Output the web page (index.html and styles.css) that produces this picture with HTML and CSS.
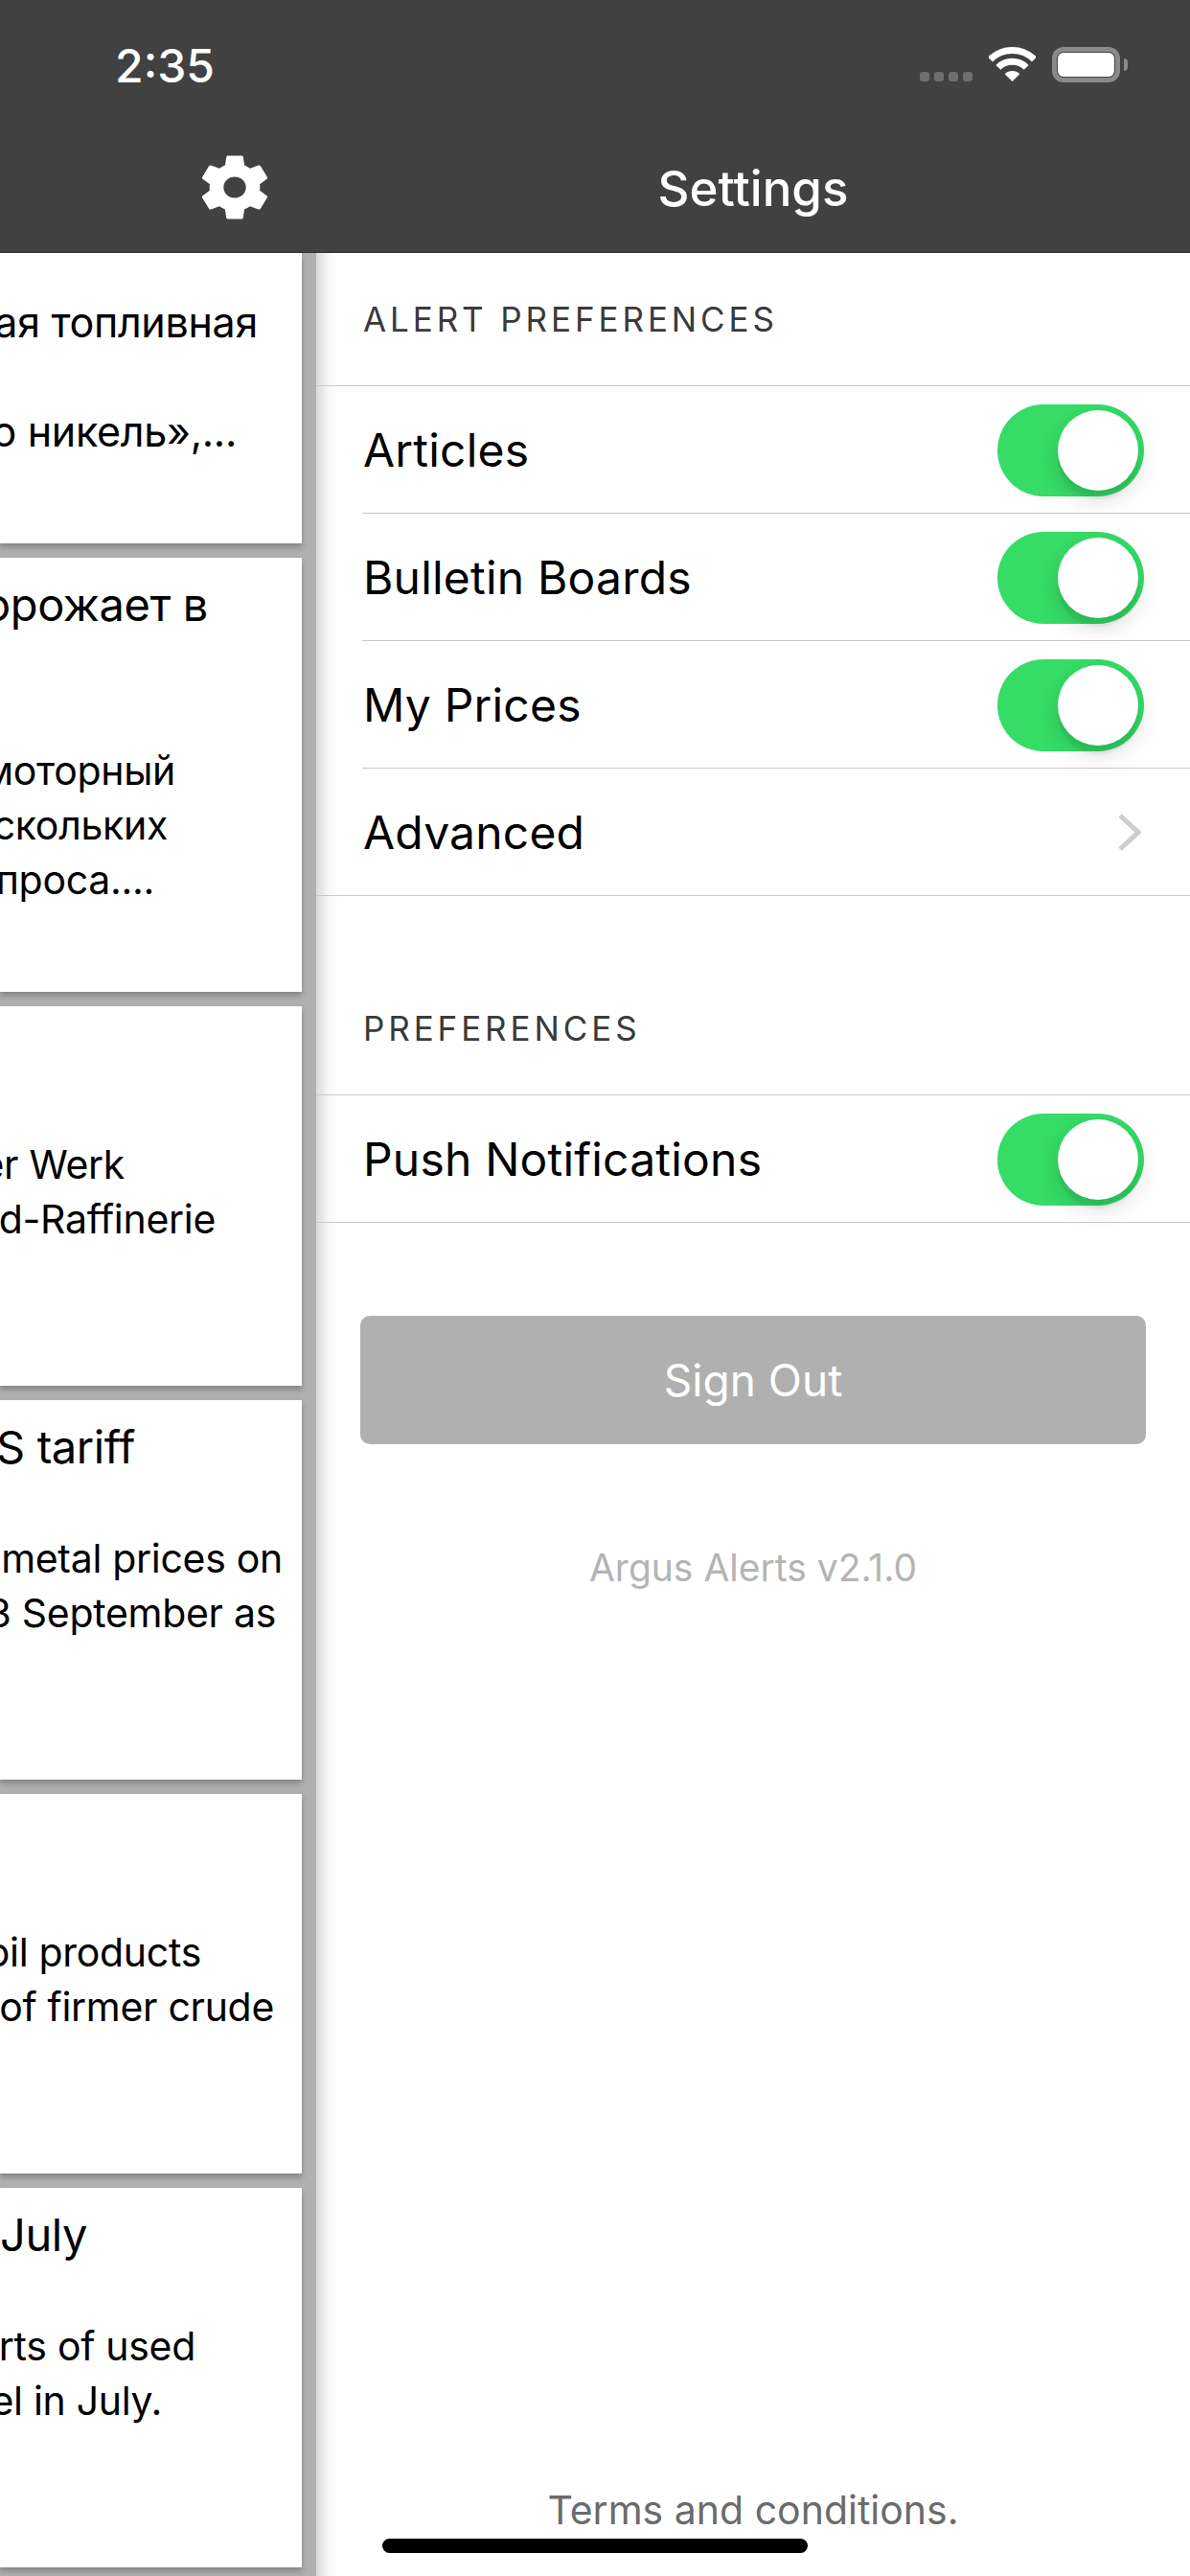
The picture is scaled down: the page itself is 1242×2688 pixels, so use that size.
FILE: index.html
```html
<!DOCTYPE html>
<html lang="en">
<head>
    <meta charset="UTF-8">
    <meta name="viewport" content="width=device-width, initial-scale=1.0">
    <title>Settings</title>
    <link rel="stylesheet" href="styles.css">
</head>
<body>
    <div class="screen">
        <!-- feed, pushed aside by the drawer -->
        <div class="feed">
            <div class="feed-header">
                <div class="time">2:35</div>
                <svg class="gear" viewBox="2.7 2 18.6 20" preserveAspectRatio="none">
                    <path fill="#fff" fill-rule="evenodd" d="M19.14 12.94c.04-.3.06-.61.06-.94 0-.32-.02-.64-.07-.94l2.03-1.58c.18-.14.23-.41.12-.61l-1.92-3.32c-.12-.22-.37-.29-.59-.22l-2.39.96c-.5-.38-1.03-.7-1.62-.94l-.36-2.54c-.04-.24-.24-.41-.48-.41h-3.84c-.24 0-.43.17-.47.41l-.36 2.54c-.59.24-1.13.57-1.62.94l-2.39-.96c-.22-.08-.47 0-.59.22L2.74 8.87c-.12.21-.08.47.12.61l2.03 1.58c-.05.3-.09.63-.09.94s.02.64.07.94l-2.03 1.58c-.18.14-.23.41-.12.61l1.92 3.32c.12.22.37.29.59.22l2.39-.96c.5.38 1.03.7 1.62.94l.36 2.54c.05.24.24.41.48.41h3.84c.24 0 .44-.17.47-.41l.36-2.54c.59-.24 1.13-.56 1.62-.94l2.39.96c.22.08.47 0 .59-.22l1.92-3.32c.12-.22.07-.47-.12-.61l-2.01-1.58zM12 15.2c-1.77 0-3.2-1.43-3.2-3.2s1.43-3.2 3.2-3.2 3.2 1.43 3.2 3.2-1.43 3.2-3.2 3.2z"/>
                </svg>
            </div>
            <div class="card-list">
                <div class="card card-short">
                    <div class="line first-line pr-48">Российская топливная</div>
                    <div class="line gap-line pr-70">по никель»,...</div>
                </div>
                <div class="card card-tall">
                    <div class="line title pr-100">Дизель дорожает в</div>
                    <div class="line title">&nbsp;</div>
                    <div class="body-text">
                        <div class="line pr-134">моторный</div>
                        <div class="line pr-142">нескольких</div>
                        <div class="line pr-156">спроса....</div>
                    </div>
                </div>
                <div class="card">
                    <div class="line title">&nbsp;</div>
                    <div class="body-text">
                        <div class="line pr-187">Der Werk</div>
                        <div class="line pr-92">Rheinland-Raffinerie</div>
                    </div>
                </div>
                <div class="card">
                    <div class="line title pr-176">US tariff</div>
                    <div class="body-text">
                        <div class="line pr-22">metal prices on</div>
                        <div class="line pr-29">3 September as</div>
                    </div>
                </div>
                <div class="card">
                    <div class="line title">&nbsp;</div>
                    <div class="body-text">
                        <div class="line pr-107">oil products</div>
                        <div class="line pr-31">of firmer crude</div>
                    </div>
                </div>
                <div class="card">
                    <div class="line title pr-226">in July</div>
                    <div class="body-text">
                        <div class="line pr-113">imports of used</div>
                        <div class="line pr-148">fuel in July.</div>
                    </div>
                </div>
            </div>
        </div>

        <div class="drawer">
            <div class="drawer-header">
                <div class="status-icons">
                    <div class="signal"><span></span><span></span><span></span><span></span></div>
                    <svg class="wifi" viewBox="0 0 49 36">
                        <path d="M1.52 13.02A32.5 32.5 0 0 1 47.48 13.02" fill="none" stroke="#fff" stroke-width="7"/>
                        <path d="M9.86 21.36A20.7 20.7 0 0 1 39.14 21.36" fill="none" stroke="#fff" stroke-width="7"/>
                        <path d="M24.5 36L16.7 28.2A11 11 0 0 1 32.3 28.2Z" fill="#fff"/>
                    </svg>
                    <div class="battery"><div class="battery-fill"></div></div>
                    <div class="battery-nub"></div>
                </div>
                <div class="drawer-title">Settings</div>
            </div>

            <div class="section-label section-first">ALERT PREFERENCES</div>
            <div class="group">
                <div class="row">
                    <span class="row-text">Articles</span>
                    <div class="toggle"><div class="knob"></div></div>
                </div>
                <div class="row">
                    <span class="row-text">Bulletin Boards</span>
                    <div class="toggle"><div class="knob"></div></div>
                </div>
                <div class="row">
                    <span class="row-text">My Prices</span>
                    <div class="toggle"><div class="knob"></div></div>
                </div>
                <div class="row">
                    <span class="row-text">Advanced</span>
                    <svg class="chevron" viewBox="0 0 24 41">
                        <path d="M2 3L21 20.5L2 38" fill="none" stroke="#cdcdcf" stroke-width="5"/>
                    </svg>
                </div>
            </div>

            <div class="section-label">PREFERENCES</div>
            <div class="group">
                <div class="row">
                    <span class="row-text">Push Notifications</span>
                    <div class="toggle"><div class="knob"></div></div>
                </div>
            </div>

            <div class="sign-out">Sign Out</div>
            <div class="version">Argus Alerts v2.1.0</div>
            <div class="terms">Terms and conditions.</div>
        </div>

        <div class="home-bar"></div>
    </div>
</body>
</html>
```

FILE: styles.css
```css
* {
    margin: 0;
    padding: 0;
    box-sizing: border-box;
}

body {
    font-family: Inter, "Noto Sans", sans-serif;
    background: #fff;
}

.screen {
    position: relative;
    display: flex;
    width: 1242px;
    height: 2688px;
    overflow: hidden;
}

/* left side */

.feed {
    width: 330px;
    flex-shrink: 0;
    background: #b0b0b0;
    overflow: hidden;
}

.feed-header {
    height: 264px;
    background: #414141;
    border-bottom: 1px solid #333;
    display: flex;
    flex-direction: column;
    align-items: flex-end;
}

.time {
    width: 330px;
    margin-top: 41px;
    padding-left: 14px;
    color: #fff;
    font-size: 48px;
    font-weight: 500;
    line-height: 56px;
    text-align: center;
}

.gear {
    width: 68px;
    height: 69px;
    margin-top: 64px;
    margin-right: 51px;
}

.card-list {
    display: flex;
    flex-direction: column;
    gap: 15px;
}

.card {
    width: 315px;
    height: 396px;
    background: #fff;
    box-shadow: 0 4px 6px rgba(0, 0, 0, 0.25);
    padding-top: 19px;
    color: #000;
}

.card-short {
    height: 303px;
    padding-top: 0;
}

.card-tall {
    height: 453px;
}

.card-tall .body-text {
    margin-top: 55px;
}

.line {
    display: flex;
    justify-content: flex-end;
    margin-right: -2px;
    white-space: nowrap;
    font-size: 41px;
    line-height: 57px;
    letter-spacing: -0.3px;
}

.card-short .line {
    font-size: 43px;
}

.title {
    font-size: 47px;
    line-height: 60px;
    letter-spacing: -0.4px;
}

.body-text {
    margin-top: 58px;
}

.first-line {
    margin-top: 44px;
}

.gap-line {
    margin-top: 57px;
}

.pr-22 { padding-right: 22px; }
.pr-29 { padding-right: 29px; }
.pr-31 { padding-right: 31px; }
.pr-48 { padding-right: 48px; }
.pr-70 { padding-right: 70px; }
.pr-92 { padding-right: 92px; }
.pr-100 { padding-right: 100px; }
.pr-107 { padding-right: 107px; }
.pr-113 { padding-right: 113px; }
.pr-134 { padding-right: 134px; }
.pr-142 { padding-right: 142px; }
.pr-148 { padding-right: 148px; }
.pr-156 { padding-right: 156px; }
.pr-176 { padding-right: 176px; }
.pr-187 { padding-right: 187px; }
.pr-226 { padding-right: 226px; }

/* drawer */

.drawer {
    flex: 1;
    display: flex;
    flex-direction: column;
    background: linear-gradient(90deg, #d9d9d9 0, #f6f6f6 12px, #fff 22px);
}

.drawer-header {
    height: 264px;
    background: #414141;
    border-bottom: 1px solid #333;
    display: flex;
    flex-direction: column;
    align-items: center;
}

.status-icons {
    display: flex;
    align-items: flex-start;
    align-self: flex-end;
    height: 86px;
    margin-top: 49px;
    margin-right: 65px;
}

.signal {
    display: flex;
    gap: 5px;
    margin-top: 26px;
    margin-right: 17px;
}

.signal span {
    width: 10px;
    height: 10px;
    border-radius: 3px;
    background: #6e6e6e;
}

.wifi {
    width: 49px;
    height: 36px;
    margin-right: 17px;
}

.battery {
    width: 71px;
    height: 37px;
    border: 5px solid #8a8a8a;
    border-radius: 12px;
    padding: 1px;
}

.battery-fill {
    height: 100%;
    background: #fff;
    border-radius: 6px;
}

.battery-nub {
    width: 4px;
    height: 13px;
    margin-top: 12px;
    margin-left: 4px;
    background: #8a8a8a;
    border-radius: 0 6px 6px 0;
}

.drawer-title {
    margin-top: 32px;
    color: #fff;
    font-size: 51px;
    font-weight: 500;
    line-height: 60px;
}

.section-label {
    height: 207px;
    padding-left: 49px;
    padding-bottom: 49px;
    display: flex;
    align-items: flex-end;
    color: #3a3a3a;
    font-size: 35px;
    line-height: 40px;
    letter-spacing: 3.9px;
}

.section-first {
    height: 138px;
}

.group {
    border-top: 1.5px solid #c8c8c8;
}

.row {
    height: 133px;
    margin-left: 48px;
    padding-right: 48px;
    border-bottom: 1.5px solid #c8c8c8;
    display: flex;
    align-items: center;
    justify-content: space-between;
}

.group .row:last-child {
    margin-left: 0;
    padding-left: 48px;
}

.row-text {
    padding-left: 1px;
    color: #000;
    font-size: 48px;
    letter-spacing: 0.2px;
}

.toggle {
    width: 153px;
    height: 96px;
    margin-top: 2px;
    border-radius: 48px;
    background: #35dc66;
    padding: 6px;
    display: flex;
    justify-content: flex-end;
}

.knob {
    width: 84px;
    height: 84px;
    border-radius: 50%;
    background: #fff;
    box-shadow: 0 9px 24px rgba(0, 0, 0, 0.15), 0 9px 3px rgba(0, 0, 0, 0.06);
}

.chevron {
    width: 24px;
    height: 41px;
    margin-right: 3px;
}

.sign-out {
    height: 134px;
    margin: 97px 46px 0;
    border-radius: 10px;
    background: #b0b0b0;
    color: #fff;
    font-size: 46px;
    line-height: 134px;
    text-align: center;
}

.version {
    margin-top: 104px;
    color: #b4b4b4;
    font-size: 39px;
    line-height: 50px;
    text-align: center;
}

.terms {
    margin-top: auto;
    margin-bottom: 44px;
    color: #6b6b6b;
    font-size: 41px;
    line-height: 50px;
    text-align: center;
}

.home-bar {
    position: absolute;
    left: 399px;
    bottom: 24px;
    width: 444px;
    height: 15px;
    border-radius: 8px;
    background: #000;
}
```
